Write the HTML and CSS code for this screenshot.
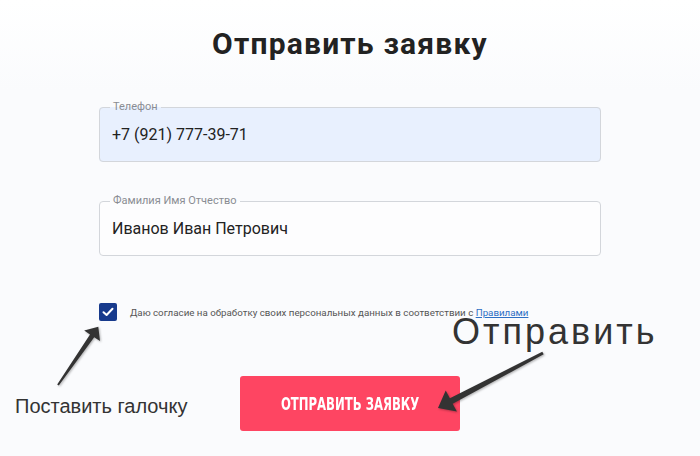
FILE: index.html
```html
<!DOCTYPE html>
<html lang="ru">
<head>
  <meta charset="UTF-8" />
  <meta name="viewport" content="width=device-width, initial-scale=1.0" />
  <title>Отправить заявку</title>
  <link rel="stylesheet" href="styles.css">
</head>
<body>
  <div class="page">
    <h1 class="title">Отправить заявку</h1>

    <form class="form" onsubmit="return false">
      <fieldset class="field field-filled">
        <legend>Телефон</legend>
        <input type="text" value="+7 (921) 777-39-71">
      </fieldset>

      <fieldset class="field">
        <legend>Фамилия Имя Отчество</legend>
        <input type="text" value="Иванов Иван Петрович">
      </fieldset>

      <label class="consent">
        <span class="check">
          <svg width="12" height="10" viewBox="0 0 12 10"><path d="M1.5 5.2 L4.6 8 L10.5 1.8" fill="none" stroke="#fff" stroke-width="2" stroke-linecap="round" stroke-linejoin="round"/></svg>
        </span>
        <span>Даю согласие на обработку своих персональных данных в соответствии с <a href="#">Правилами</a></span>
      </label>

      <button class="submit" type="submit"><span>Отправить заявку</span></button>
    </form>

    <!-- annotations drawn over the form -->
    <div class="note note-send">Отправить</div>
    <div class="note note-check">Поставить галочку</div>
    <svg class="arrows" width="700" height="456" viewBox="0 0 700 456">
      <polygon points="58.8,385.6 94.2,337.2 100,341.1 98.3,326.7 84.2,330.5 90,334.4 57.2,384.4" />
      <polygon points="543.7,354.3 452.7,403.7 456.9,411.6 438,408 445.7,390.4 449.9,398.3 542.3,351.7" />
    </svg>
  </div>
</body>
</html>
```

FILE: styles.css
```css
body {
  margin: 0;
  font-family: Roboto, "Liberation Sans", sans-serif;
  background-color: #fafbfd;
}

.page {
  position: relative;
  width: 700px;
  height: 456px;
  padding-top: 26px;
  box-sizing: border-box;
  background: linear-gradient(#ffffff 0, #fafbfd 90px);
  overflow: hidden;
}

.title {
  margin: 0;
  font-size: 30px;
  line-height: 36px;
  font-weight: 700;
  letter-spacing: 1.2px;
  color: #222222;
  text-align: center;
}

.form {
  width: 502px;
  margin: 39px auto 0;
  display: flex;
  flex-direction: column;
}

.field {
  margin: 0;
  padding: 0 12px 6px;
  border: 1px solid #d3d6db;
  border-radius: 4px;
  background-color: #fdfdfe;
}

.field + .field {
  margin-top: 33px;
}

.field-filled {
  background-color: #e8f0fe;
}

.field legend {
  margin-left: -2px;
  padding: 0 3px;
  font-size: 11px;
  line-height: 12px;
  color: #8a8d93;
}

.field input {
  display: block;
  width: 100%;
  height: 42px;
  padding: 0;
  border: none;
  background: transparent;
  font-family: inherit;
  font-size: 16px;
  color: #222222;
  outline: none;
}

.consent {
  display: flex;
  align-items: center;
  gap: 13px;
  margin-top: 47px;
  font-size: 9.75px;
  color: #555555;
}

.check {
  display: flex;
  align-items: center;
  justify-content: center;
  width: 18px;
  height: 18px;
  border-radius: 2px;
  background-color: #173a8c;
}

.consent a {
  color: #2d6fc4;
}

.submit {
  align-self: center;
  width: 220px;
  height: 55px;
  margin-top: 55px;
  border: none;
  border-radius: 3px;
  background-color: #fe4562;
  color: #ffffff;
  font-family: "DejaVu Sans Condensed", "DejaVu Sans", sans-serif;
  font-weight: 700;
  font-size: 18px;
  text-transform: uppercase;
  cursor: pointer;
}

.submit span {
  display: inline-block;
  transform: scaleX(0.72);
  white-space: nowrap;
}

.note {
  position: absolute;
  line-height: 1;
  color: #333333;
  font-family: "Liberation Sans", Arial, sans-serif;
  white-space: nowrap;
}

.note-send {
  left: 452px;
  top: 314px;
  font-size: 36px;
  letter-spacing: 3px;
}

.note-check {
  left: 15px;
  top: 396px;
  font-size: 20px;
}

.arrows {
  position: absolute;
  left: 0;
  top: 0;
  fill: #333333;
  filter: drop-shadow(1px 1px 1px rgba(0, 0, 0, 0.3));
  pointer-events: none;
}
```
